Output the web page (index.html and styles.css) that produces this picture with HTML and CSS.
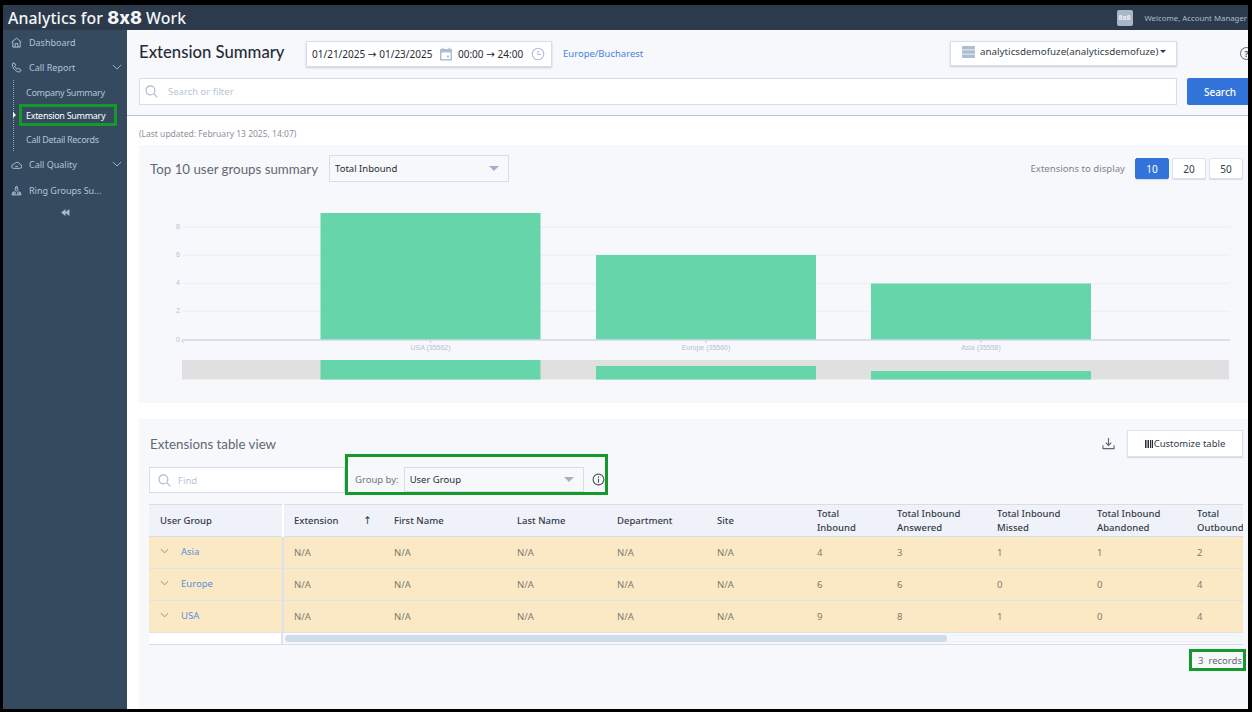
FILE: index.html
```html
<!DOCTYPE html>
<html lang="en">
  <head>
    <meta charset="UTF-8" />
    <title>Extension Summary</title>
    <link rel="stylesheet" href="styles.css">
  </head>
  <body>
    <div class="frame">
      <header class="topbar">
        <div class="brand">Analytics for <b>8x8</b> Work</div>
        <div class="welcome"><span class="avatar">8x8</span><span>Welcome, Account Manager</span></div>
      </header>
      <div class="shell">
        <nav class="sidebar">
          <a class="nav-item">
            <svg viewBox="0 0 12 12"><path d="M.8 5.500 6 1.200l5.200 4.300M2 4.800V11h8V4.800M4.500 11V7.200h3V11"/></svg>
            <span>Dashboard</span>
          </a>
          <a class="nav-item">
            <svg viewBox="0 0 12 12"><path d="M1.500 1.800 3.600 1l1.500 2.600-1.200 1c.6 1.500 1.400 2.500 2.800 3.200l1.200-1 2.800 1.700c.2 1.300-.7 2.400-2 2.400C5 10.500 1 6.500 1.500 1.800z"/></svg>
            <span>Call Report</span>
            <svg class="chevron" viewBox="0 0 12 12"><path d="M1 3.500 6 8.500 11 3.500"/></svg>
          </a>
          <div class="subnav">
            <a class="sub-item">Company Summary</a>
            <a class="sub-item current">Extension Summary</a>
            <a class="sub-item">Call Detail Records</a>
          </div>
          <a class="nav-item">
            <svg viewBox="0 0 12 12"><path d="M2.800 10.200h6.700a2.100 2.100 0 0 0 .3-4.200A3 3 0 0 0 5 4.300 2 2 0 0 0 3 6a2.100 2.100 0 0 0-.2 4.200zM4.500 8h3"/></svg>
            <span>Call Quality</span>
            <svg class="chevron" viewBox="0 0 12 12"><path d="M1 3.500 6 8.500 11 3.500"/></svg>
          </a>
          <a class="nav-item">
            <svg viewBox="0 0 12 12"><path d="M4.500 3.500 6 1l1.500 2.500M2.500 7.500 1 10.800h10L9.500 7.500"/><circle cx="6" cy="5" r="1.500"/><circle cx="3.500" cy="8.800" r="1.300"/><circle cx="8.500" cy="8.800" r="1.300"/></svg>
            <span>Ring Groups Su...</span>
          </a>
          <div class="collapse">
            <svg viewBox="0 0 10 8"><path d="M5 0v8L0 4zM9.500 0v8l-5-4z"/></svg>
          </div>
        </nav>

        <main class="content">
          <section class="page-head">
            <div class="head-row">
              <h1>Extension Summary</h1>
              <div class="date-box">
                <span class="range">01/21/2025 <i>&#8594;</i> 01/23/2025</span>
                <svg class="muted-icon" viewBox="0 0 14 14"><path class="fill" d="M1 2h2V.8h1.500V2h5V.8H11V2h2v11.500H1zM2.500 5.500v6.500h9V5.500z"/><path class="fill" d="M8 8.500h2v2H8z"/></svg>
                <span class="range time">00:00 <i>&#8594;</i> 24:00</span>
                <svg class="muted-icon" viewBox="0 0 14 14"><circle cx="7" cy="7" r="5.800"/><path d="M7 3.500V7.500H10"/></svg>
              </div>
              <a class="tz">Europe/Bucharest</a>
              <div class="account">
                <svg viewBox="0 0 14 13"><path d="M0 0h14v3.800H0zM0 4.600h14v3.800H0zM0 9.200h14V13H0z"/></svg>
                <span>analyticsdemofuze(analyticsdemofuze)</span>
                <i class="caret-small"></i>
              </div>
              <div class="help">?</div>
            </div>
            <div class="search-row">
              <div class="search-box">
                <svg class="search-icon" viewBox="0 0 14 14"><circle cx="5.800" cy="5.800" r="4.800"/><path d="M9.300 9.300 13.300 13.300"/></svg>
                <span>Search or filter</span>
              </div>
              <button class="search-btn">Search</button>
            </div>
          </section>

          <p class="updated">(Last updated: February 13 2025, 14:07)</p>

          <section class="card chart-card">
            <div class="card-row">
              <h2>Top 10 user groups summary</h2>
              <div class="select chart-select"><span>Total Inbound</span><i class="caret"></i></div>
              <div class="display">
                <span class="display-label">Extensions to display</span>
                <button class="num active">10</button>
                <button class="num">20</button>
                <button class="num">50</button>
              </div>
            </div>
            <svg class="chart" viewBox="0 0 1109 218" width="1109" height="218">
              <g class="grid">
                <path d="M44 42H1091M44 70H1091M44 98.500H1091M44 126.500H1091"/>
              </g>
              <g class="ticks">
                <text x="41" y="44">8</text>
                <text x="41" y="72">6</text>
                <text x="41" y="100">4</text>
                <text x="41" y="128">2</text>
                <text x="41" y="157">0</text>
              </g>
              <rect class="bar" x="181.500" y="28" width="220" height="127"/>
              <rect class="bar" x="457" y="70" width="220" height="85"/>
              <rect class="bar" x="732" y="98.500" width="220" height="56.500"/>
              <path class="axis" d="M43.500 157.500V155H1091M291.500 155v3M567 155v3M842 155v3"/>
              <g class="labels">
                <text x="291.500" y="165">USA (35562)</text>
                <text x="567" y="165">Europe (35560)</text>
                <text x="842" y="165">Asia (35558)</text>
              </g>
              <rect class="zoom" x="43" y="175" width="1047" height="19.500"/>
              <rect class="bar" x="181.500" y="175" width="220" height="19.500"/>
              <rect class="bar" x="457" y="181" width="220" height="13.500"/>
              <rect class="bar" x="732" y="186" width="220" height="8.500"/>
            </svg>
          </section>

          <section class="card table-card">
            <div class="table-head">
              <h2>Extensions table view</h2>
              <svg class="download" viewBox="0 0 14 14"><path d="M7 1v7.500M4 6l3 3 3-3M1 9v3.500h12V9"/></svg>
              <button class="customize"><svg viewBox="0 0 8 8"><path d="M0 0h1.500v8H0zM2.500 0H4v8H2.500zM5 0h1.300v8H5zM7 0h1v8H7z"/></svg>Customize table</button>
            </div>
            <div class="tools">
              <div class="find">
                <svg class="search-icon" viewBox="0 0 14 14"><circle cx="5.800" cy="5.800" r="4.800"/><path d="M9.300 9.300 13.300 13.300"/></svg>
                <span>Find</span>
              </div>
              <div class="group-by">
                <span class="group-label">Group by:</span>
                <div class="select group-select"><span>User Group</span><i class="caret"></i></div>
                <svg class="info" viewBox="0 0 14 14"><circle cx="7" cy="7" r="5.800"/><path d="M7 6.300V10.500M7 3.500v1.500"/></svg>
              </div>
            </div>
            <div class="table-wrap">
              <table>
                <colgroup>
                  <col class="c-group"><col class="c-ext"><col class="c-first"><col class="c-std"><col class="c-std"><col class="c-std"><col class="c-total"><col class="c-std"><col class="c-std"><col class="c-std"><col class="c-std">
                </colgroup>
                <thead>
                  <tr>
                    <th class="frozen">User Group</th>
                    <th class="sorted">Extension<span class="arrow">&#8593;</span></th>
                    <th>First Name</th>
                    <th>Last Name</th>
                    <th>Department</th>
                    <th>Site</th>
                    <th>Total<br>Inbound</th>
                    <th>Total Inbound<br>Answered</th>
                    <th>Total Inbound<br>Missed</th>
                    <th>Total Inbound<br>Abandoned</th>
                    <th>Total<br>Outbound</th>
                  </tr>
                </thead>
                <tbody>
                  <tr>
                    <td class="frozen"><svg class="row-chevron" viewBox="0 0 10 6"><path d="M1 1 5 5 9 1"/></svg><a>Asia</a></td>
                    <td class="first-data">N/A</td><td>N/A</td><td>N/A</td><td>N/A</td><td>N/A</td><td>4</td><td>3</td><td>1</td><td>1</td><td>2</td>
                  </tr>
                  <tr>
                    <td class="frozen"><svg class="row-chevron" viewBox="0 0 10 6"><path d="M1 1 5 5 9 1"/></svg><a>Europe</a></td>
                    <td class="first-data">N/A</td><td>N/A</td><td>N/A</td><td>N/A</td><td>N/A</td><td>6</td><td>6</td><td>0</td><td>0</td><td>4</td>
                  </tr>
                  <tr>
                    <td class="frozen"><svg class="row-chevron" viewBox="0 0 10 6"><path d="M1 1 5 5 9 1"/></svg><a>USA</a></td>
                    <td class="first-data">N/A</td><td>N/A</td><td>N/A</td><td>N/A</td><td>N/A</td><td>9</td><td>8</td><td>1</td><td>0</td><td>4</td>
                  </tr>
                </tbody>
              </table>
              <div class="scroll-row">
                <div class="scroll-corner"></div>
                <div class="scroll-track"><div class="scroll-thumb"></div></div>
              </div>
            </div>
            <div class="records-row"><div class="records"><span>3</span><span>records</span></div></div>
          </section>
        </main>
      </div>
    </div>
  </body>
</html>
```

FILE: styles.css
```css
* {
  margin: 0;
  padding: 0;
  box-sizing: border-box;
}

html, body {
  height: 100%;
  overflow: hidden;
  background-color: #000;
}

body {
  font-family: "Noto Sans", "Open Sans", sans-serif;
  color: #333b47;
}

.frame {
  width: 1252px;
  height: 712px;
  padding: 5px 4px 3px 3px;
  display: flex;
  flex-direction: column;
}

/* top bar */
.topbar {
  height: 25px;
  flex: none;
  background-color: #2c3a4c;
  display: flex;
  align-items: center;
  justify-content: space-between;
  padding-left: 5px;
}

.brand {
  color: #f4f6f8;
  font-size: 15.800px;
  font-weight: 500;
  letter-spacing: 0.1px;
  white-space: nowrap;
}

.brand b {
  font-size: 18px;
  font-weight: 800;
  font-family: "Inter", sans-serif;
  font-feature-settings: "calt" 0;
  letter-spacing: 0;
}

.welcome {
  display: flex;
  align-items: center;
  gap: 12px;
  color: #a9bad2;
  font-size: 7.800px;
  padding-right: 1px;
}

.avatar {
  width: 16px;
  height: 16px;
  background-color: #a9b6c8;
  color: #eef1f5;
  border-radius: 2px;
  font-size: 7px;
  font-weight: 700;
  display: flex;
  align-items: center;
  justify-content: center;
}

.shell {
  flex: 1;
  display: flex;
  min-height: 0;
}

/* sidebar */
.sidebar {
  width: 124px;
  flex: none;
  background-color: #354a5f;
  color: #b4c3d6;
  font-size: 9px;
}

.nav-item {
  height: 26px;
  display: flex;
  align-items: center;
  padding-left: 8px;
}

.sidebar > .nav-item:first-child {
  height: 24px;
}

.nav-item svg {
  width: 11px;
  height: 11px;
  flex: none;
  fill: none;
  stroke: #b4c8df;
  stroke-width: 1;
  margin-right: 7px;
}

.nav-item .chevron {
  margin-left: auto;
  margin-right: 5px;
  width: 10px;
  height: 10px;
}

.subnav {
  margin-left: 10px;
  border-left: 1px dotted #8fa3ba;
}

.sub-item {
  height: 24px;
  margin-left: 5px;
  padding-left: 7px;
  display: flex;
  align-items: center;
  white-space: nowrap;
  letter-spacing: -0.3px;
}

.sub-item.current {
  color: #fff;
  width: 98px;
  height: 22px;
  margin-bottom: 1px;
  border: 3px solid #15992a;
  padding-left: 4px;
  position: relative;
}

.sub-item.current::before {
  content: "";
  position: absolute;
  left: -9px;
  top: 5px;
  border-left: 3px solid #fff;
  border-top: 3px solid transparent;
  border-bottom: 3px solid transparent;
}

.collapse {
  display: flex;
  justify-content: center;
  padding-top: 6px;
}

.collapse svg {
  width: 9px;
  height: 7px;
  fill: #a9bad2;
}

/* main column */
.content {
  flex: 1;
  min-width: 0;
  background-color: #fff;
  overflow: hidden;
  display: flex;
  flex-direction: column;
}

.page-head {
  height: 86px;
  flex: none;
  background-color: #f6f8fb;
  border-bottom: 1px solid #b6c3d3;
  padding: 11px 0 0 12px;
}

.head-row {
  display: flex;
  align-items: flex-start;
  height: 26px;
  white-space: nowrap;
}

h1 {
  font-family: "Lato", "Noto Sans", sans-serif;
  font-size: 16.700px;
  font-weight: 500;
  color: #262c36;
  width: 167px;
  flex: none;
  line-height: 22px;
}

.date-box {
  width: 246px;
  height: 26px;
  flex: none;
  background-color: #fff;
  border: 1px solid #d5deea;
  box-shadow: 0 1px 2px #c4cedb;
  font-size: 10px;
  color: #262c36;
  display: flex;
  align-items: center;
  padding-left: 5px;
}

.range {
  width: 127px;
  flex: none;
  white-space: nowrap;
}

.range.time {
  width: 73px;
}

.range i {
  font-family: "DejaVu Sans", sans-serif;
  font-style: normal;
  font-size: 10.500px;
}

.muted-icon {
  width: 14px;
  height: 14px;
  flex: none;
  fill: none;
  stroke: #aebdd1;
  stroke-width: 1.100;
  margin-right: 5px;
}

.muted-icon .fill {
  fill: #aebdd1;
  stroke: none;
}

.tz {
  color: #4a82dc;
  font-size: 9.500px;
  margin-left: 11px;
  line-height: 26px;
}

.account {
  margin-left: auto;
  width: 227px;
  height: 25px;
  flex: none;
  background-color: #fff;
  border: 1px solid #d5deea;
  box-shadow: 0 1px 2px #c4cedb;
  display: flex;
  align-items: center;
  padding: 0 0 4px 11px;
  font-size: 9.800px;
  color: #343c48;
}

.account svg {
  width: 13px;
  height: 12px;
  flex: none;
  fill: #aebdd1;
  margin-right: 5px;
}

.caret-small {
  border-top: 3px solid #333b47;
  border-left: 3px solid transparent;
  border-right: 3px solid transparent;
  margin-left: 2px;
}

.help {
  margin: 6px -5px 0 63px;
  width: 13px;
  height: 13px;
  flex: none;
  border: 1px solid #5e6672;
  border-radius: 50%;
  color: #5e6672;
  font-size: 9px;
  font-weight: 700;
  text-align: center;
  line-height: 11px;
}

.search-row {
  display: flex;
  gap: 10px;
  margin-top: 11px;
}

.search-box, .find {
  height: 27px;
  background-color: #fff;
  border: 1px solid #d5deea;
  display: flex;
  align-items: center;
  color: #b7c3d2;
  font-size: 9.500px;
}

.search-box {
  width: 1038px;
  flex: none;
  padding: 0 0 1px 5px;
}

.search-icon {
  width: 13px;
  height: 13px;
  flex: none;
  fill: none;
  stroke: #a9b9ce;
  stroke-width: 1.200;
  margin-right: 10px;
}

.search-btn {
  width: 66px;
  height: 27px;
  flex: none;
  border: none;
  background-color: #3274d9;
  color: #fff;
  font: inherit;
  font-size: 10px;
  font-weight: 500;
  border-radius: 2px;
}

.updated {
  font-size: 8.500px;
  color: #8c929c;
  padding: 12px 0 0 12px;
  height: 29px;
  flex: none;
}

.card {
  background-color: #f6f8fb;
  margin: 0 0 0 12px;
}

h2 {
  font-family: "Lato", "Noto Sans", sans-serif;
  font-size: 13.300px;
  font-weight: 400;
  color: #5f6875;
  white-space: nowrap;
}

/* chart card */
.chart-card {
  height: 258px;
  flex: none;
  margin-bottom: 16px;
}

.card-row {
  display: flex;
  align-items: center;
  height: 40px;
  padding: 12px 5px 5px 11px;
}

.select {
  background-color: #f6f8fb;
  border: 1px solid #d5deea;
  display: flex;
  align-items: center;
  justify-content: space-between;
  font-size: 9.500px;
  color: #262c36;
  flex: none;
}

.chart-select {
  width: 180px;
  height: 27px;
  margin-left: 11px;
  padding: 0 9px 0 5px;
}

.caret {
  border-top: 5px solid #a3b1c4;
  border-left: 5px solid transparent;
  border-right: 5px solid transparent;
}

.display {
  margin-left: auto;
  display: flex;
  align-items: center;
  gap: 3px;
}

.display-label {
  font-size: 9.600px;
  color: #7d8592;
  margin-right: 7px;
}

.num {
  width: 34px;
  height: 21px;
  background-color: #fff;
  border: 1px solid #dbe2ec;
  box-shadow: 0 1px 1px #d3dbe6;
  border-radius: 2px;
  font: inherit;
  font-size: 10px;
  color: #333b47;
}

.num.active {
  background-color: #3274d9;
  border-color: #3274d9;
  color: #fff;
}

.chart {
  display: block;
}

.grid path {
  stroke: #edf0f5;
  stroke-width: 1.500;
  fill: none;
}

.ticks text {
  font-size: 7px;
  fill: #b6c2d4;
  text-anchor: end;
  font-family: "Liberation Sans", sans-serif;
}

.labels text {
  font-size: 7px;
  fill: #b6c2d4;
  text-anchor: middle;
  font-family: "Liberation Sans", sans-serif;
}

.bar {
  fill: #66d6aa;
}

.axis {
  stroke: #ced8e6;
  stroke-width: 1.500;
  fill: none;
}

.zoom {
  fill: #e0e0e0;
}

/* table card */
.table-card {
  flex: 1;
  min-height: 0;
  padding: 11px 5px 0 10px;
}

.table-head {
  display: flex;
  align-items: center;
  height: 27px;
}

.table-head h2 {
  padding-left: 1px;
}

.download {
  margin-left: auto;
  width: 13px;
  height: 13px;
  fill: none;
  stroke: #5e6672;
  stroke-width: 1.200;
  margin-right: 12px;
}

.customize {
  width: 116px;
  height: 27px;
  flex: none;
  background-color: #fff;
  border: 1px solid #dbe2ec;
  box-shadow: 0 1px 1px #d3dbe6;
  font: inherit;
  font-size: 9.500px;
  color: #333b47;
  display: flex;
  align-items: center;
  justify-content: center;
}

.customize svg {
  width: 8px;
  height: 8px;
  fill: #262c36;
  margin-right: 1px;
}

.tools {
  display: flex;
  align-items: flex-start;
  margin-top: -3px;
  height: 41px;
}

.find {
  width: 196px;
  height: 26px;
  flex: none;
  margin-top: 13px;
  padding-left: 8px;
}

.find .search-icon {
  margin-right: 7px;
}

.group-by {
  width: 263px;
  height: 41px;
  flex: none;
  border: 3px solid #15992a;
  display: flex;
  align-items: center;
  padding: 10px 0 0 7px;
  white-space: nowrap;
}

.group-label {
  font-size: 9.500px;
  color: #6e7683;
  margin-right: 5px;
}

.group-select {
  width: 180px;
  height: 25px;
  padding: 0 9px 0 5px;
}

.info {
  width: 13px;
  height: 13px;
  margin-left: 8px;
  fill: none;
  stroke: #4a525e;
  stroke-width: 1.200;
}

.table-wrap {
  margin-top: 9px;
  overflow: hidden;
  border-bottom: 1px solid #d5deea;
}

table {
  border-collapse: collapse;
  table-layout: fixed;
  width: 1137px;
  font-size: 9.500px;
}

.c-group { width: 134px; }
.c-ext { width: 100px; }
.c-first { width: 123px; }
.c-std { width: 100px; }
.c-total { width: 80px; }

thead tr {
  background-color: #eff2f8;
  height: 32px;
}

th {
  text-align: left;
  font-weight: 500;
  color: #333b47;
  line-height: 14px;
  padding-left: 11px;
  border-top: 1px solid #d5deea;
  border-bottom: 1px solid #d5deea;
  white-space: nowrap;
}

th.sorted, td.first-data {
  padding-left: 10px;
}

.sorted {
  position: relative;
}

.arrow {
  position: absolute;
  left: 79px;
  top: 8px;
  font-family: "DejaVu Sans", sans-serif;
  font-size: 10.500px;
}

tbody tr {
  background-color: #fae9c4;
  height: 32px;
}

td {
  padding-left: 11px;
  color: #7d7a6e;
  border-bottom: 1px solid #dfe3e6;
}

.frozen {
  border-right: 2px solid #dbe2ec;
}

th.frozen {
  border-right-color: #fff;
}

td.frozen a {
  color: #5b8ede;
  margin-left: 12px;
  position: relative;
  top: -1px;
}

.row-chevron {
  width: 9px;
  height: 6px;
  fill: none;
  stroke: #7d8592;
  stroke-width: 1;
  position: relative;
  top: -2px;
}

.scroll-row {
  display: flex;
  height: 11px;
}

.scroll-corner {
  width: 134px;
  flex: none;
  background-color: #fff;
  border-right: 2px solid #dbe2ec;
}

.scroll-track {
  width: 956px;
  margin: 2px 0 2px 2px;
  border: 1px solid #edf0f5;
  border-radius: 4px;
  height: 7px;
}

.scroll-thumb {
  width: 662px;
  height: 7px;
  margin: -1px;
  background-color: #d0dcea;
  border-radius: 4px;
}

.records-row {
  display: flex;
  justify-content: flex-end;
  margin: 4px -3px 0 0;
}

.records {
  width: 57px;
  height: 22px;
  border: 3px solid #15992a;
  display: flex;
  align-items: center;
  gap: 5px;
  padding-left: 6px;
  font-size: 9.500px;
  color: #5f6875;
  white-space: nowrap;
}
```
